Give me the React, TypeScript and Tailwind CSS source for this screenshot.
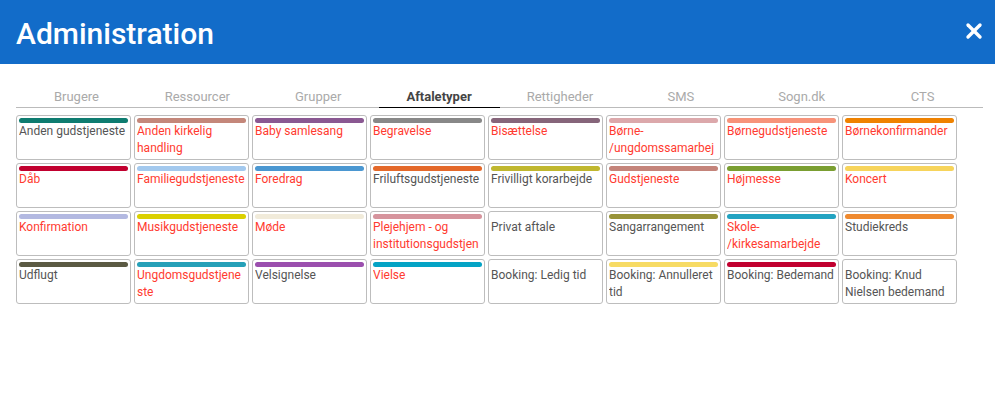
import React from 'react';
import { X } from 'lucide-react';

type Item = { name: string; color?: string; red?: boolean };

const tabs = ['Brugere', 'Ressourcer', 'Grupper', 'Aftaletyper', 'Rettigheder', 'SMS', 'Sogn.dk', 'CTS'];

const items: Item[] = [
  { name: 'Anden gudstjeneste', color: '#0e7c70' },
  { name: 'Anden kirkelig handling', color: '#c4877a', red: true },
  { name: 'Baby samlesang', color: '#8a5892', red: true },
  { name: 'Begravelse', color: '#888888', red: true },
  { name: 'Bisættelse', color: '#86657a', red: true },
  { name: 'Børne-\u200B/ungdomssamarbejde', color: '#dca8ab', red: true },
  { name: 'Børnegudstjeneste', color: '#f7937a', red: true },
  { name: 'Børnekonfirmander', color: '#ef8200', red: true },
  { name: 'Dåb', color: '#c1002f', red: true },
  { name: 'Familiegudstjeneste', color: '#a3c9ee', red: true },
  { name: 'Foredrag', color: '#4b97d1', red: true },
  { name: 'Friluftsgudstjeneste', color: '#e4692a' },
  { name: 'Frivilligt korarbejde', color: '#c0b72f' },
  { name: 'Gudstjeneste', color: '#c4847a', red: true },
  { name: 'Højmesse', color: '#7a9e31', red: true },
  { name: 'Koncert', color: '#f7d45b', red: true },
  { name: 'Konfirmation', color: '#b3b9e1', red: true },
  { name: 'Musikgudstjeneste', color: '#dbd000', red: true },
  { name: 'Møde', color: '#f1ebda', red: true },
  { name: 'Plejehjem - og institutionsgudstjeneste', color: '#d6949d', red: true },
  { name: 'Privat aftale' },
  { name: 'Sangarrangement', color: '#989338' },
  { name: 'Skole-\u200B/kirkesamarbejde', color: '#23a3c1', red: true },
  { name: 'Studiekreds', color: '#ef8a2f' },
  { name: 'Udflugt', color: '#5b5a43' },
  { name: 'Ungdomsgudstjeneste', color: '#26a0b8', red: true },
  { name: 'Velsignelse', color: '#9b4fae' },
  { name: 'Vielse', color: '#04a3c5', red: true },
  { name: 'Booking: Ledig tid' },
  { name: 'Booking: Annulleret tid', color: '#f7db64' },
  { name: 'Booking: Bedemand', color: '#c1002f' },
  { name: 'Booking: Knud Nielsen bedemand' },
];

export default function App() {
  return (
    <div className="w-[995px] h-[406px] bg-white font-['Roboto',sans-serif]">
      <header className="h-16 bg-[#126cc9] flex items-center justify-between pl-4 pr-[9px] pt-1">
        <h1 className="text-[30px] font-medium text-white leading-none">Administration</h1>
        <button className="text-white -mt-[6px]">
          <X className="w-6 h-6" strokeWidth={3.4} />
        </button>
      </header>

      <div className="px-4 pt-[23px]">
        <nav className="flex border-b border-[#bbbbbb] w-[967px]">
          {tabs.map((t) => (
            <div
              key={t}
              className={
                t === 'Aftaletyper'
                  ? 'flex-1 text-center text-[13px] leading-[20px] font-bold text-[#444] border-b border-black -mb-px'
                  : 'flex-1 text-center text-[13px] leading-[20px] text-[#aaaaaa]'
              }
            >
              {t}
            </div>
          ))}
        </nav>

        <div className="grid grid-cols-[repeat(8,115px)] auto-rows-[45px] gap-[3px] mt-[7px]">
          {items.map((it) => (
            <div key={it.name} className="border border-[#bdbdbd] rounded-[3px] px-[2px] pt-[2px] overflow-hidden">
              <div className="h-[5px] rounded-full" style={{ backgroundColor: it.color ?? 'transparent' }} />
              <div
                className={
                  it.red
                    ? 'text-[12px] leading-[17px] text-[#ff3b30] [overflow-wrap:break-word] max-h-[34px] overflow-hidden'
                    : 'text-[12px] leading-[17px] text-[#555555] [overflow-wrap:break-word] max-h-[34px] overflow-hidden'
                }
              >
                {it.name}
              </div>
            </div>
          ))}
        </div>
      </div>
    </div>
  );
}
